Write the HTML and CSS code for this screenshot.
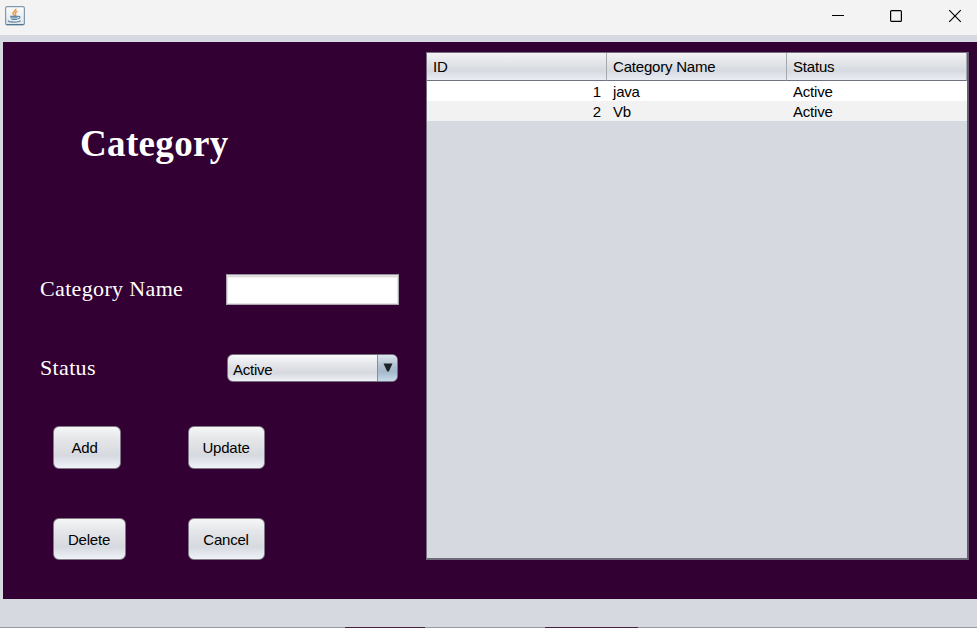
FILE: index.html
```html
<!DOCTYPE html>
<html lang="en">
<head>
<meta charset="utf-8">
<title>Category</title>
<link rel="stylesheet" href="styles.css">
</head>
<body>
<div class="window">
  <header class="titlebar">
    <svg class="app-icon" width="20" height="20" viewBox="0 0 20 20">
      <defs><linearGradient id="tile" x1="0" y1="0" x2="0" y2="1"><stop offset="0" stop-color="#fcfcfd"/><stop offset="1" stop-color="#dfe4e9"/></linearGradient></defs>
      <rect x=".6" y=".6" width="18.8" height="18.3" rx="1.6" fill="url(#tile)" stroke="#7f99ad" stroke-width="1.2"/>
      <path d="M1.5 18.5h17" stroke="#54758f" stroke-width="1"/>
      <path d="M10.8 2.700c1 1.800-3.300 3-2.800 4.800.2.900 1 1.300 1.300 2.400M12.500 5.300c-2 .8-2.800 1.500-2 2.600.5.7.3 1.300-.4 2" fill="none" stroke="#ee9a48" stroke-width="1.500"/>
      <path d="M5 10.300h8.500M5.500 11.900h7M6.500 13.500h5.500M13 10.300c3-.3 2.200 2.300-.4 2.700M3.500 14.500c-1.800 2 10.300 2.300 12 .2" fill="none" stroke="#6488a8" stroke-width="1.200"/>
    </svg>
    <div class="controls">
      <svg width="14" height="14" viewBox="0 0 14 14"><path d="M2 6.500h12" stroke="#000"/></svg>
      <svg width="14" height="14" viewBox="0 0 14 14"><rect x="1.600" y="1.600" width="10.800" height="10.800" rx="1" fill="none" stroke="#000" stroke-width="1.200"/></svg>
      <svg width="14" height="14" viewBox="0 0 14 14"><path d="M1.200 1.200l11.600 11.600M12.800 1.200L1.200 12.800" stroke="#000" stroke-width="1.150"/></svg>
    </div>
  </header>
  <main class="panel">
    <form class="form">
      <h1>Category</h1>
      <div class="field name-field">
        <label for="name">Category Name</label>
        <input id="name" type="text">
      </div>
      <div class="field status-field">
        <span class="label">Status</span>
        <div class="combo"><span class="value">Active</span><span class="arrow"><svg width="10" height="9" viewBox="0 0 10 9"><path d="M.5.500h9L5.800 8.500H4.200z" fill="#1e2328"/></svg></span></div>
      </div>
      <div class="actions">
        <button class="add" type="button">Add</button>
        <button class="update" type="button">Update</button>
        <button class="delete" type="button">Delete</button>
        <button class="cancel" type="button">Cancel</button>
      </div>
    </form>
    <section class="table-pane">
      <table>
        <thead><tr><th>ID</th><th>Category Name</th><th>Status</th></tr></thead>
        <tbody>
          <tr><td class="num">1</td><td>java</td><td>Active</td></tr>
          <tr><td class="num">2</td><td>Vb</td><td>Active</td></tr>
        </tbody>
      </table>
    </section>
  </main>
  <footer class="edge"><i></i><i></i></footer>
</div>
</body>
</html>
```
FILE: styles.css
```css
* { box-sizing: border-box; }
body { margin: 0; overflow: hidden; font: 15px/20px "Liberation Sans", Arial, sans-serif; color: #000; }
.window { width: 977px; height: 628px; background: #d6d9df; display: flex; flex-direction: column; }
.titlebar { height: 35px; flex: none; background: #f3f3f3; display: flex; justify-content: space-between; padding: 6px 15px 0 5px; }
.app-icon, .controls svg { display: block; }
.controls { display: flex; gap: 45px; padding-top: 3px; }
.panel { height: 557px; flex: none; margin: 7px 0 0 3px; background: #330033; display: grid; grid-template-columns: 423px 543px; }
.form { padding: 81px 0 0 37px; }
h1 { margin: 0 0 110px 40px; font: bold 37px/41px "Liberation Serif", "Times New Roman", serif; color: #fff; letter-spacing: .35px; }
.field { display: flex; align-items: flex-start; color: #fff; font: 22px/24px "Liberation Serif", "Times New Roman", serif; letter-spacing: .35px; }
.field label, .field .label { width: 186px; padding-top: 2px; white-space: nowrap; }
.field label { padding-top: 3px; }
.name-field { height: 31px; margin-bottom: 49px; }
.status-field { height: 28px; margin-bottom: 44px; }
input { width: 173px; height: 31px; padding: 0 6px; border: 1px solid; border-color: #948f99 #aaa5ae #aaa5ae; border-radius: 0; background: #fff; box-shadow: inset 0 0 0 1px #e4e3e6, inset 0 2px 2px #ccc; outline: none; }
.combo { display: flex; width: 171px; height: 28px; margin-left: 1px; overflow: hidden; border: 1px solid #77717f; border-radius: 6px; background: linear-gradient(#fafafb, #e4e6ea 35%, #d6d9df 70%, #f0f2f6); color: #000; font: 15px/28px "Liberation Sans", Arial, sans-serif; letter-spacing: -.25px; }
.value { flex: 1; padding: 1px 0 0 5px; }
.arrow { width: 20px; padding: 8px 0 0 5px; border-left: 1px solid #7993aa; background: linear-gradient(#dce5ee, #aebfd0 45%, #a5b9cd 65%, #c8dbeb); }
.arrow svg { display: block; }
.actions { display: grid; grid-template-columns: 135px 77px; row-gap: 49px; padding-left: 13px; }
button { height: 43px; padding: 1px 1px 0 0; border: 1px solid #807985; border-radius: 6px; background: linear-gradient(#f5f6f7, #e5e6e9 30%, #d6d9df 70%, #eff2f8); box-shadow: inset 0 0 1px #fff; font: 15px/20px "Liberation Sans", Arial, sans-serif; letter-spacing: -.2px; color: #000; }
.add { width: 68px; padding: 1px 5px 0 0; }
.delete { width: 73px; }
.delete, .cancel { height: 42px; }
.table-pane { height: 508px; margin-top: 10px; border: 1px solid #747080; border-bottom: 2px solid #706b7b; border-right: 2px solid; border-right-color: #665f72; background: #d6d9df; }
table { width: 540px; table-layout: fixed; border-collapse: separate; border-spacing: 0; letter-spacing: -.2px; }
th { height: 28px; padding: 1px 6px 0; text-align: left; font-weight: normal; border-right: 1px solid #a6a9b0; border-bottom: 1px solid #6f7280; background: linear-gradient(#f3f3f5, #dfe1e5 45%, #d6d9df 65%, #eaedf3); }
th:first-child { width: 180px; }
th:nth-child(2) { width: 180px; }
td { height: 20px; padding: 1px 6px 0; line-height: 19px; background: #fff; }
tr:nth-child(2) td { background: #f2f2f2; }
.num { text-align: right; padding-right: 6px; }
.edge { height: 1px; margin-top: auto; background: #999a9e; display: flex; padding-left: 345px; gap: 120px; }
.edge i { width: 80px; background: #462042; }
.edge i:last-child { width: 93px; }
```
